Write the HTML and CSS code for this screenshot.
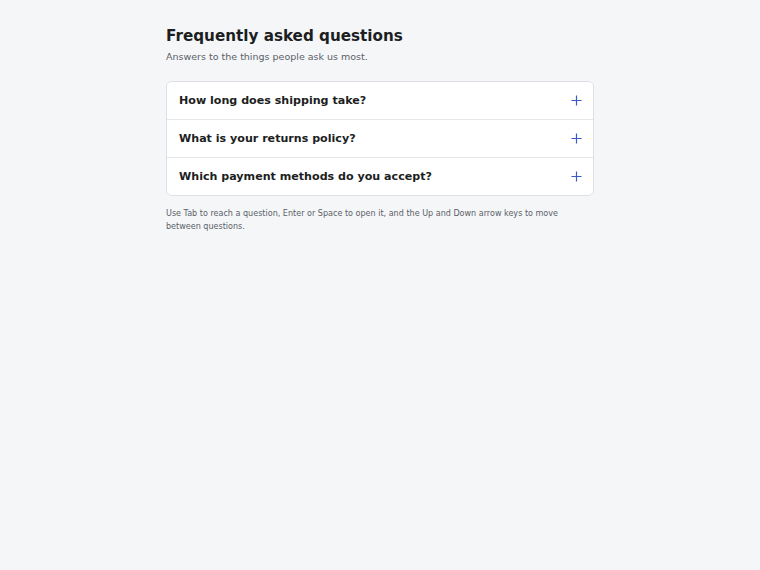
FILE: index.html
```html
<!DOCTYPE html>
<html lang="en">
<head>
    <meta charset="UTF-8">
    <title>FAQ</title>
    <link rel="stylesheet" href="styles.css">
</head>
<body>
    <div class="faq">
        <h1 class="faq-title">Frequently asked questions</h1>
        <p class="faq-lead">Answers to the things people ask us most.</p>
        <div class="faq-list">
            <button class="faq-item" type="button" aria-expanded="false">
                <span class="faq-q">How long does shipping take?</span>
                <svg class="faq-icon" viewBox="0 0 12 12" aria-hidden="true"><path d="M6 0.5v11M0.5 6h11"/></svg>
            </button>
            <button class="faq-item" type="button" aria-expanded="false">
                <span class="faq-q">What is your returns policy?</span>
                <svg class="faq-icon" viewBox="0 0 12 12" aria-hidden="true"><path d="M6 0.5v11M0.5 6h11"/></svg>
            </button>
            <button class="faq-item" type="button" aria-expanded="false">
                <span class="faq-q">Which payment methods do you accept?</span>
                <svg class="faq-icon" viewBox="0 0 12 12" aria-hidden="true"><path d="M6 0.5v11M0.5 6h11"/></svg>
            </button>
        </div>
        <p class="faq-hint">Use Tab to reach a question, Enter or Space to open it, and the Up and Down arrow keys to move between questions.</p>
    </div>
</body>
</html>
```

FILE: styles.css
```css
*{
    margin: 0;
    padding: 0;
    box-sizing: border-box;
}
body{
    background: #f5f6f8;
    font-family: "DejaVu Sans", sans-serif;
    color: #1c1e22;
}
.faq{
    width: 428px;
    margin: 0 auto;
    padding-top: 26px;
}
.faq-title{
    font-size: 15.2px;
    font-weight: bold;
    line-height: 20px;
}
.faq-lead{
    margin-top: 4px;
    font-size: 9.5px;
    line-height: 13px;
    color: #5a5f68;
}
.faq-list{
    margin-top: 18px;
    background: #fff;
    border: 1px solid #dde0e5;
    border-radius: 6px;
    overflow: hidden;
}
.faq-item{
    display: flex;
    align-items: center;
    justify-content: space-between;
    width: 100%;
    height: 38px;
    padding: 0 11px 0 12px;
    border: 0;
    border-top: 1px solid #e4e6ea;
    background: #fff;
    font: inherit;
    color: inherit;
    text-align: left;
    cursor: pointer;
}
.faq-item:first-child{
    border-top: 0;
    height: 37px;
}
.faq-q{
    font-size: 11.1px;
    font-weight: bold;
}
.faq-icon{
    width: 11px;
    height: 11px;
    fill: none;
    stroke: #3a5bc7;
    stroke-width: 1.3;
}
.faq-hint{
    margin-top: 11px;
    font-size: 8.05px;
    line-height: 13px;
    color: #5a5f68;
}
```
